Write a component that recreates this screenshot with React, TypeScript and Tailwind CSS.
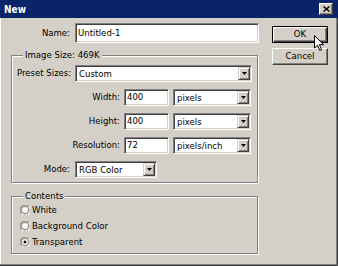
import React from 'react';

const sunken =
  'border border-t-[#808080] border-l-[#808080] border-r-white border-b-white shadow-[inset_1px_1px_0_#404040,inset_-1px_-1px_0_#d4d0c8]';
const raised =
  'border border-t-white border-l-white border-r-[#404040] border-b-[#404040] shadow-[inset_-1px_-1px_0_#808080]';

function ArrowButton() {
  return (
    <div className="w-[12px] shrink-0 bg-[#d4d0c8] border border-t-[#d4d0c8] border-l-[#d4d0c8] border-r-[#404040] border-b-[#404040] shadow-[inset_1px_1px_0_#fff,inset_-1px_-1px_0_#808080] flex items-center justify-center">
      <svg width="5" height="3" viewBox="0 0 5 3">
        <path d="M0 0H5L2.5 3Z" fill="#000" />
      </svg>
    </div>
  );
}

function Select({ value, className }: { value: string; className: string }) {
  return (
    <div className={`${sunken} ${className} bg-white h-[17px] p-[1px] flex`}>
      <span className="flex-1 pl-[2px] leading-[13px] whitespace-nowrap">{value}</span>
      <ArrowButton />
    </div>
  );
}

function Input({ value, className }: { value: string; className: string }) {
  return (
    <div className={`${sunken} ${className} bg-white p-[1px] flex items-center`}>
      <span className="pl-[1px] whitespace-nowrap">{value}</span>
    </div>
  );
}

function Radio({ checked, label }: { checked?: boolean; label: string }) {
  return (
    <div className="h-[16px] flex items-center gap-[2px]">
      <svg width="10" height="10" viewBox="0 0 10 10">
        <path d="M9 1.5A4.5 4.5 0 0 0 1.5 9" fill="none" stroke="#808080" />
        <path d="M1.5 9A4.5 4.5 0 0 0 9 1.5" fill="none" stroke="#fff" />
        <circle cx="5" cy="5" r="3.6" fill="#fff" stroke="#404040" strokeWidth="0.6" />
        {checked && <circle cx="5" cy="5" r="1.5" fill="#000" />}
      </svg>
      <span>{label}</span>
    </div>
  );
}

function Group({ title, className, children }: { title: string; className: string; children: React.ReactNode }) {
  return (
    <div className={`relative ml-[11px] w-[247px] border border-[#808080] shadow-[inset_1px_1px_0_#fff,1px_1px_0_#fff] ${className}`}>
      <span className="absolute left-[11px] top-[-7px] px-[2px] bg-[#d4d0c8] leading-[12px]">{title}</span>
      {children}
    </div>
  );
}

export default function App() {
  return (
    <div className="w-[338px] h-[266px] bg-[#d4d0c8] text-black text-[9.5px] font-['DejaVu_Sans_Condensed','DejaVu_Sans',sans-serif] [font-stretch:condensed] relative overflow-hidden shadow-[inset_-1px_-1px_0_#404040,inset_-2px_-2px_0_#808080,inset_1px_0_0_#fff]">
      {/* title bar */}
      <div className="h-[18px] bg-[#0a246a] flex items-center justify-between pl-[4px] pr-[5px]">
        <span className="text-white font-bold text-[10px]">New</span>
        <div className={`${raised} bg-[#d4d0c8] w-[14px] h-[12px] flex items-center justify-center`}>
          <svg width="7" height="6" viewBox="0 0 7 6">
            <path d="M0.5 0.5L6.5 5.5M6.5 0.5L0.5 5.5" stroke="#000" strokeWidth="1.4" />
          </svg>
        </div>
      </div>

      <div className="flex">
        {/* left column */}
        <div className="w-[260px]">
          <div className="mt-[5px] flex items-center">
            <span className="w-[70px] text-right">Name:</span>
            <Input value="Untitled-1" className="ml-[5px] w-[184px] h-[20px]" />
          </div>

          <Group title="Image Size: 469K" className="mt-[12px] h-[128px] pt-[9px]">
            <div className="flex items-center pl-[5px]">
              <span className="w-[58px] whitespace-nowrap">Preset Sizes:</span>
              <Select value="Custom" className="w-[177px]" />
            </div>
            {[
              ['Width:', '400', 'pixels'],
              ['Height:', '400', 'pixels'],
              ['Resolution:', '72', 'pixels/inch'],
            ].map(([label, val, unit]) => (
              <div key={label} className="mt-[7px] flex items-center">
                <span className="w-[112px] text-right pr-[4px]">{label}</span>
                <Input value={val} className="w-[45px] h-[17px]" />
                <Select value={unit} className="ml-[4px] w-[78px]" />
              </div>
            ))}
            <div className="mt-[7px] flex items-center">
              <span className="w-[63px] text-right pr-[5px]">Mode:</span>
              <Select value="RGB Color" className="w-[82px]" />
            </div>
          </Group>

          <Group title="Contents" className="mt-[13px] h-[58px] pt-[5px] pl-[8px]">
            <Radio label="White" />
            <Radio label="Background Color" />
            <Radio label="Transparent" checked />
          </Group>
        </div>

        {/* buttons */}
        <div className="ml-[12px] pt-[8px] flex flex-col gap-[5px]">
          <div className="w-[56px] h-[17px] border border-black bg-[#d4d0c8] shadow-[inset_1px_1px_0_#fff,inset_-1px_-1px_0_#404040,inset_-2px_-2px_0_#808080] flex items-center justify-center">
            OK
          </div>
          <div className={`${raised} w-[56px] h-[17px] bg-[#d4d0c8] flex items-center justify-center`}>
            Cancel
          </div>
        </div>
      </div>

      {/* mouse pointer over OK */}
      <svg className="absolute left-[314px] top-[35px]" width="11" height="17" viewBox="0 0 11 17">
        <path d="M0.5 0.5V13L3.5 10.2L5.8 15.5L7.6 14.7L5.4 9.6H9.5Z" fill="#fff" stroke="#000" strokeWidth="1" strokeLinejoin="round" />
      </svg>
    </div>
  );
}
